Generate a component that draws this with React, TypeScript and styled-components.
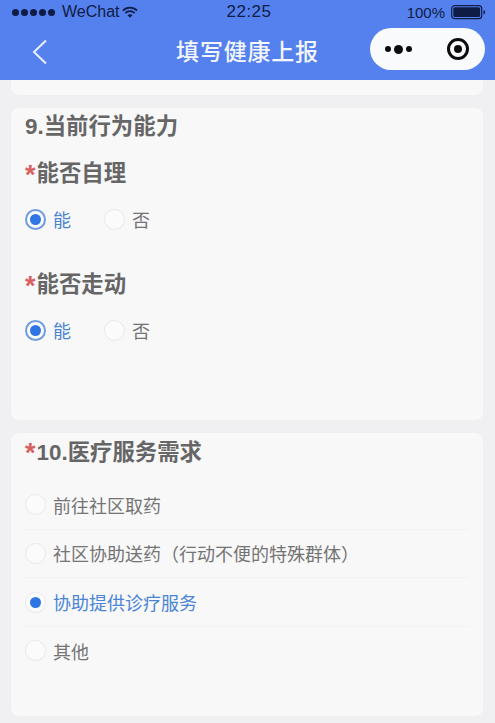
import React from 'react';
import styled, { createGlobalStyle } from 'styled-components';

const GlobalStyle = createGlobalStyle`
  html, body {
    margin: 0;
    padding: 0;
    background: #f0f0f2;
  }
  body {
    font-family: "Liberation Sans", "Noto Sans CJK SC", sans-serif;
  }
`;

const Page = styled.div`
  width: 495px;
  height: 723px;
  overflow: hidden;
  display: flex;
  flex-direction: column;
  background: #f0f0f2;
`;

const Header = styled.header`
  height: 80px;
  flex: none;
  background: #5481ee;
  display: flex;
  flex-direction: column;
`;

const StatusBar = styled.div`
  height: 24px;
  padding: 0 9px 0 12px;
  display: grid;
  grid-template-columns: 1fr auto 1fr;
  align-items: center;
  color: #0f1c45;
`;

const Carrier = styled.div`
  display: flex;
  align-items: center;
  font-size: 16px;
`;

const Signal = styled.div`
  display: flex;
  gap: 2px;
  margin-right: 7px;
`;

const SignalDot = styled.span`
  width: 7px;
  height: 7px;
  border-radius: 50%;
  background: #0f1c45;
`;

const Wifi = styled.svg`
  margin-left: 2px;
`;

const Clock = styled.div`
  font-size: 17px;
  letter-spacing: 0.5px;
`;

const Power = styled.div`
  display: flex;
  justify-content: flex-end;
  align-items: center;
  gap: 6px;
  font-size: 15px;
`;

const NavBar = styled.div`
  flex: 1;
  position: relative;
  display: flex;
  align-items: center;
  justify-content: center;
  padding-bottom: 4px;
`;

const BackButton = styled.div`
  position: absolute;
  left: 32px;
  top: 15px;
  display: flex;
`;

const Title = styled.div`
  color: #f4f6fd;
  font-size: 23px;
  font-weight: 500;
  letter-spacing: 0.8px;
`;

const Capsule = styled.div`
  position: absolute;
  right: 10px;
  top: 4px;
  width: 115px;
  height: 42px;
  box-sizing: border-box;
  padding: 0 16px 0 15px;
  border-radius: 21px;
  background: #f9fafc;
  display: flex;
  align-items: center;
  justify-content: space-between;
`;

const Dots = styled.div`
  display: flex;
  align-items: center;
  gap: 3px;
`;

const Dot = styled.span<{ $big?: boolean }>`
  width: ${({ $big }) => ($big ? 9 : 6)}px;
  height: ${({ $big }) => ($big ? 9 : 6)}px;
  border-radius: 50%;
  background: #0c0c0c;
`;

const Target = styled.div`
  width: 22px;
  height: 22px;
  box-sizing: border-box;
  border: 3px solid #0c0c0c;
  border-radius: 50%;
  display: flex;
  align-items: center;
  justify-content: center;
`;

const TargetCore = styled.span`
  width: 8px;
  height: 8px;
  border-radius: 50%;
  background: #0c0c0c;
`;

const Body = styled.main`
  flex: 1;
  padding: 0 12px 0 11px;
  display: flex;
  flex-direction: column;
  gap: 13px;
`;

const CardTail = styled.div`
  height: 15px;
  background: #f8f8f9;
  border-radius: 0 0 8px 8px;
`;

const Card = styled.section<{ $height: number }>`
  height: ${({ $height }) => $height}px;
  box-sizing: border-box;
  background: #f8f8f9;
  border-radius: 8px;
  padding: 0 14px;
`;

const SectionTitle = styled.h2<{ $height: number }>`
  margin: 0;
  height: ${({ $height }) => $height}px;
  display: flex;
  align-items: center;
  font-size: 22.4px;
  font-weight: 700;
  color: #666666;
`;

const Star = styled.span`
  color: #d9605f;
  font-size: 27px;
  line-height: 1;
  margin-right: 1px;
  transform: translateY(4px);
`;

const FieldLabel = styled.h3`
  margin: 16px 0 0;
  height: 32px;
  display: flex;
  align-items: center;
  font-size: 22.4px;
  font-weight: 700;
  color: #666666;
`;

const InlineGroup = styled.div`
  height: 50px;
  margin: 7px 0 22px;
  display: flex;
  align-items: center;
  gap: 33px;
`;

const Option = styled.div`
  display: flex;
  align-items: center;
  gap: 7px;
`;

const Circle = styled.span<{ $ring: boolean }>`
  width: 21px;
  height: 21px;
  box-sizing: border-box;
  border-radius: 50%;
  flex: none;
  display: flex;
  align-items: center;
  justify-content: center;
  background: #fbfbfc;
  border: ${({ $ring }) => ($ring ? '2px solid #6f9be0' : '1.5px solid #e9e9ec')};
`;

const CircleDot = styled.span`
  width: 11px;
  height: 11px;
  border-radius: 50%;
  background: #2f76e4;
`;

const OptionText = styled.span<{ $active?: boolean }>`
  font-size: 18px;
  color: ${({ $active }) => ($active ? '#4a84d4' : '#747474')};
`;

const OptionList = styled.div`
  margin-top: 15px;
  display: flex;
  flex-direction: column;
`;

const ListRow = styled.div`
  height: 47.67px;
  flex: none;
  display: flex;
  align-items: center;
  border-bottom: 1px solid #f2f2f4;

  &:last-child {
    border-bottom: none;
  }
`;

const Radio = ({ state }: { state: 'off' | 'ring' | 'solid' }) => (
  <Circle $ring={state === 'ring'}>{state !== 'off' && <CircleDot />}</Circle>
);

const YesNo = () => (
  <InlineGroup>
    <Option>
      <Radio state="ring" />
      <OptionText $active>能</OptionText>
    </Option>
    <Option>
      <Radio state="off" />
      <OptionText>否</OptionText>
    </Option>
  </InlineGroup>
);

const services = [
  { label: '前往社区取药', checked: false },
  { label: '社区协助送药（行动不便的特殊群体）', checked: false },
  { label: '协助提供诊疗服务', checked: true },
  { label: '其他', checked: false },
];

export default function App() {
  return (
    <Page>
      <GlobalStyle />
      <Header>
        <StatusBar>
          <Carrier>
            <Signal>
              {[0, 1, 2, 3, 4].map((i) => (
                <SignalDot key={i} />
              ))}
            </Signal>
            WeChat
            <Wifi width="16" height="13" viewBox="0 0 17 13">
              <path d="M1 4.5a10.5 10.5 0 0 1 15 0" fill="none" stroke="#0f1c45" strokeWidth="1.8" />
              <path d="M3.6 7.2a6.8 6.8 0 0 1 9.8 0" fill="none" stroke="#0f1c45" strokeWidth="1.8" />
              <path d="M5.9 9.5a3.4 3.4 0 0 1 5.2 0L8.5 12.2z" fill="#0f1c45" />
            </Wifi>
          </Carrier>
          <Clock>22:25</Clock>
          <Power>
            100%
            <svg width="35" height="15" viewBox="0 0 35 15">
              <rect x="0.7" y="0.7" width="30" height="13" rx="3" fill="none" stroke="#0f1c45" strokeWidth="1.2" />
              <rect x="2.3" y="2.3" width="26.8" height="9.8" rx="1.5" fill="#0f1c45" />
              <path d="M32.5 5v4.6a2.4 2.4 0 0 0 0-4.6z" fill="#0f1c45" />
            </svg>
          </Power>
        </StatusBar>
        <NavBar>
          <BackButton>
            <svg width="16" height="26" viewBox="0 0 16 26">
              <path d="M14 1.5 2 13l12 11.5" fill="none" stroke="#e9eefc" strokeWidth="2" />
            </svg>
          </BackButton>
          <Title>填写健康上报</Title>
          <Capsule>
            <Dots>
              <Dot />
              <Dot $big />
              <Dot />
            </Dots>
            <Target>
              <TargetCore />
            </Target>
          </Capsule>
        </NavBar>
      </Header>
      <Body>
        <CardTail />
        <Card $height={312}>
          <SectionTitle $height={31}>9.当前行为能力</SectionTitle>
          <FieldLabel>
            <Star>*</Star>能否自理
          </FieldLabel>
          <YesNo />
          <FieldLabel>
            <Star>*</Star>能否走动
          </FieldLabel>
          <YesNo />
        </Card>
        <Card $height={283}>
          <SectionTitle $height={33}>
            <Star>*</Star>10.医疗服务需求
          </SectionTitle>
          <OptionList>
            {services.map((s) => (
              <ListRow key={s.label}>
                <Option>
                  <Radio state={s.checked ? 'solid' : 'off'} />
                  <OptionText $active={s.checked}>{s.label}</OptionText>
                </Option>
              </ListRow>
            ))}
          </OptionList>
        </Card>
      </Body>
    </Page>
  );
}
